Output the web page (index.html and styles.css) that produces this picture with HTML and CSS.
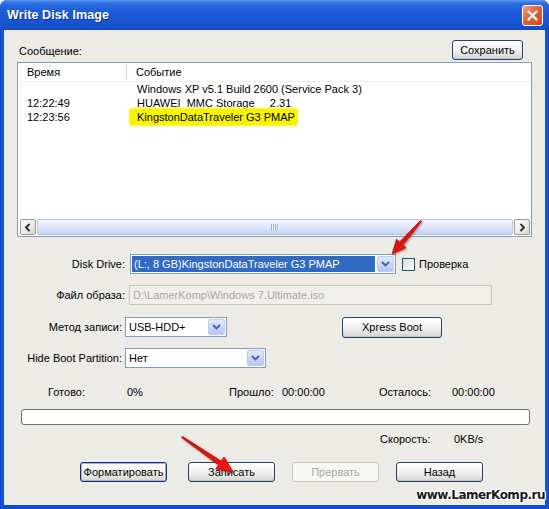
FILE: index.html
```html
<!DOCTYPE html>
<html>
<head>
<meta charset="utf-8">
<link rel="stylesheet" href="styles.css">
</head>
<body>
<div class="window">
  <div class="titlebar">
    <span class="title">Write Disk Image</span>
    <span class="close"><svg width="11" height="11" viewBox="0 0 11 11"><path d="M1.5 1.5l8 8M9.5 1.5l-8 8" stroke="#fff" stroke-width="2.2" stroke-linecap="round"/></svg></span>
  </div>
  <div class="body">
    <div class="msg-head">
      <span class="msg-label">Сообщение:</span>
      <button class="btn save">Сохранить</button>
    </div>
    <div class="list">
      <div class="lhead"><div class="c1">Время</div><div class="c2">Событие</div></div>
      <div class="lrows">
        <div class="lrow"><div class="c1"></div><div class="c2">Windows XP v5.1 Build 2600 (Service Pack 3)</div></div>
        <div class="lrow"><div class="c1">12:22:49</div><div class="c2">HUAWEI&nbsp; MMC Storage &nbsp;&nbsp;&nbsp; 2.31</div></div>
        <div class="lrow"><div class="c1">12:23:56</div><div class="c2"><span class="hl">KingstonDataTraveler G3 PMAP</span></div></div>
      </div>
      <div class="hscroll">
        <div class="sbtn"><svg width="8" height="9" viewBox="0 0 8 9"><path d="M5.5 1L2 4.5 5.5 8" stroke="#2b2b2b" stroke-width="1.8" fill="none"/></svg></div>
        <div class="thumb"><span class="grip"></span></div>
        <div class="sbtn"><svg width="8" height="9" viewBox="0 0 8 9"><path d="M2.5 1L6 4.5 2.5 8" stroke="#2b2b2b" stroke-width="1.8" fill="none"/></svg></div>
      </div>
    </div>

    <div class="row r-disk">
      <span class="lbl">Disk Drive:</span>
      <div class="combo sel w-disk"><span class="val">(L:, 8 GB)KingstonDataTraveler G3 PMAP</span><span class="dd"><svg width="9" height="6" viewBox="0 0 9 6"><path d="M1 1l3.5 3.5L8 1" stroke="#4d6185" stroke-width="1.8" fill="none"/></svg></span></div>
      <span class="chk"></span><span class="chk-lbl">Проверка</span>
    </div>
    <div class="row r-file">
      <span class="lbl">Файл образа:</span>
      <div class="field">D:\LamerKomp\Windows 7.Ultimate.iso</div>
    </div>
    <div class="row r-method">
      <span class="lbl">Метод записи:</span>
      <div class="combo w-method"><span class="val">USB-HDD+</span><span class="dd"><svg width="9" height="6" viewBox="0 0 9 6"><path d="M1 1l3.5 3.5L8 1" stroke="#4d6185" stroke-width="1.8" fill="none"/></svg></span></div>
      <button class="btn xpress">Xpress Boot</button>
    </div>
    <div class="row r-hide">
      <span class="lbl">Hide Boot Partition:</span>
      <div class="combo w-hide"><span class="val">Нет</span><span class="dd"><svg width="9" height="6" viewBox="0 0 9 6"><path d="M1 1l3.5 3.5L8 1" stroke="#4d6185" stroke-width="1.8" fill="none"/></svg></span></div>
    </div>

    <div class="stats">
      <span>Готово:</span><span>0%</span><span>Прошло:</span><span>00:00:00</span><span>Осталось:</span><span>00:00:00</span>
    </div>
    <div class="progress"></div>
    <div class="speed"><span>Скорость:</span><span>0KB/s</span></div>

    <div class="buttons">
      <button class="btn b87 focus gap-a">Форматировать</button>
      <button class="btn b87">Записать</button>
      <button class="btn b87 disabled">Прервать</button>
      <button class="btn b87">Назад</button>
    </div>
  </div>

  <div class="watermark">www.LamerKomp.ru</div>

  <svg class="arrows" width="549" height="509" viewBox="0 0 549 509">
    <defs>
      <linearGradient id="ar" x1="0" y1="0" x2="1" y2="1">
        <stop offset="0" stop-color="#c80d0d"/>
        <stop offset="1" stop-color="#f01c14"/>
      </linearGradient>
    </defs>
    <polygon points="421.6,221.3 402.9,245 405.9,247.7 392,254 396.5,239.3 399.5,242 420.4,220.5" fill="url(#ar)" stroke="#a00" stroke-width="0.6"/>
    <polygon points="181.6,437.6 218.5,465 215.6,469 233,472 224,457 221.1,461 182.4,436.4" fill="url(#ar)" stroke="#a00" stroke-width="0.6"/>
  </svg>
</div>
</body>
</html>
```

FILE: styles.css
```css
* { box-sizing: border-box; }
html, body { margin: 0; padding: 0; background: #fff; }
body {
  font-family: "Liberation Sans", Arial, sans-serif;
  font-size: 11px;
  color: #000;
}
.window {
  position: relative;
  width: 549px;
  height: 509px;
  background: linear-gradient(90deg, #0840c4, #1c5ad8 2px, #0d4cd0 4px, #0d4cd0 545px, #1c5ad8 547px, #0840c4);
  border-radius: 7px 7px 0 0;
  overflow: hidden;
  display: flex;
  flex-direction: column;
}
.titlebar {
  height: 30px;
  flex: none;
  display: flex;
  align-items: center;
  justify-content: space-between;
  padding: 0 6px 0 7px;
  background: linear-gradient(#5c9af2 0, #3a7ce8 2px, #2566de 5px, #1e5cd8 12px, #1a56d3 20px, #1650cb 27px, #1448c0 30px);
}
.title {
  color: #fff;
  font-weight: bold;
  font-size: 12.5px;
  text-shadow: 1px 1px 0 #0b2f8c;
  letter-spacing: 0.1px;
}
.close {
  width: 21px;
  height: 21px;
  border: 1px solid #fff;
  border-radius: 3px;
  background: linear-gradient(135deg, #f4a283, #e0643e 45%, #c9461f);
  display: flex;
  align-items: center;
  justify-content: center;
  margin-top: 1px;
}
.body {
  flex: 1;
  margin: 0 4px 4px;
  background: #ecebe6;
  padding: 0 13px;
  display: flex;
  flex-direction: column;
}
.msg-head {
  display: flex;
  justify-content: space-between;
  align-items: center;
  margin-top: 10px;
  height: 20px;
  padding-left: 2px;
}
.msg-label { padding-top: 2px; }
.btn {
  font: inherit;
  color: #000;
  height: 20px;
  padding: 0;
  border: 1px solid #233f78;
  border-radius: 3px;
  background: linear-gradient(#ffffff, #f6f6f4 35%, #e8e8e4 70%, #d4d3cc);
  box-shadow: inset 0 -1px 0 #c6c3b8;
}
.save { width: 71px; margin-right: 9px; }
.list {
  margin-top: 2px;
  height: 175px;
  border: 1px solid #7f9db9;
  background: #fff;
  display: flex;
  flex-direction: column;
  padding: 0 1px 1px 2px;
}
.lhead {
  height: 19px;
  flex: none;
  display: flex;
  align-items: center;
  border-bottom: 1px solid #efeee9;
}
.lhead .c1 {
  width: 107px;
  padding-left: 7px;
  border-right: 1px solid #d8d6cf;
  line-height: 14px;
}
.lhead .c2 { padding-left: 9px; }
.lrows { flex: 1; }
.lrow { display: flex; height: 14px; line-height: 14px; }
.lrow .c1 { width: 108px; padding-left: 7px; }
.lrow .c2 { padding-left: 9px; white-space: pre; }
.hl {
  background: #f8f400;
  padding: 2px 2px 2px 7px;
  margin-left: -7px;
  border-radius: 2px;
  box-shadow: 0 0 2px 1px #f3ef30;
}
.hscroll {
  height: 16px;
  flex: none;
  display: flex;
}
.sbtn {
  width: 16px;
  height: 16px;
  border: 1px solid #9c9a94;
  border-radius: 2px;
  background: linear-gradient(135deg, #ffffff, #e9e8e2 60%, #d6d4cc);
  display: flex;
  align-items: center;
  justify-content: center;
}
.thumb {
  flex: 1;
  margin: 0 1px;
  border: 1px solid #b4c6ec;
  border-radius: 2px;
  background: linear-gradient(#f4f7fe, #dfe8fb 50%, #c5d5f6);
  display: flex;
  align-items: center;
  justify-content: center;
}
.grip {
  width: 8px;
  height: 7px;
  background: repeating-linear-gradient(90deg, #9fb3dc 0 1px, #eef3fd 1px 2px);
}
.row { display: flex; align-items: center; height: 20px; flex: none; }
.lbl { flex: none; text-align: right; white-space: nowrap; }
.r-disk { margin-top: 17px; }
.r-disk .lbl { width: 108px; margin-right: 5px; }
.r-file { margin-top: 11px; }
.r-file .lbl { width: 108px; margin-right: 4px; }
.r-method { margin-top: 12px; }
.r-hide { margin-top: 11px; }
.r-method .lbl, .r-hide .lbl { width: 105px; margin-right: 3px; }
.combo {
  height: 20px;
  border: 1px solid #7f9db9;
  background: #fff;
  display: flex;
  padding: 1px;
  flex: none;
}
.combo .val {
  flex: 1;
  padding-left: 2px;
  line-height: 16px;
  white-space: nowrap;
  overflow: hidden;
}
.sel .val {
  background: #316ac5;
  color: #fff;
  margin-right: 2px;
}
.combo .dd {
  width: 17px;
  flex: none;
  border: 1px solid #bccbef;
  border-radius: 2px;
  background: linear-gradient(#e0e9fd, #c3d4f8 60%, #b3c7f5);
  display: flex;
  align-items: center;
  justify-content: center;
}
.w-disk { width: 266px; }
.w-method { width: 102px; }
.w-hide { width: 141px; }
.chk {
  width: 13px;
  height: 13px;
  margin-left: 6px;
  border: 1px solid #1c5180;
  background: linear-gradient(135deg, #dcdbd5, #ffffff);
  flex: none;
}
.chk-lbl { margin-left: 4px; }
.field {
  width: 363px;
  height: 20px;
  border: 1px solid #c9c7ba;
  background: #f0efea;
  color: #aca899;
  line-height: 18px;
  padding-left: 3px;
}
.xpress { width: 100px; height: 21px; margin-left: 115px; }
.stats {
  margin-top: 17px;
  height: 14px;
  line-height: 14px;
  display: grid;
  grid-template-columns: 79px 102px 53px 97px 73px auto;
  padding-left: 31px;
}
.progress {
  margin: 10px 2px 0 4px;
  height: 16px;
  border: 1px solid #6f6f6f;
  border-radius: 3px;
  background: #fff;
  flex: none;
}
.speed {
  margin-top: 7px;
  height: 14px;
  line-height: 14px;
  display: grid;
  grid-template-columns: 74px auto;
  padding-left: 363px;
}
.buttons {
  margin-top: 16px;
  display: flex;
  gap: 17px;
  padding-left: 63px;
}
.b87 { width: 87px; height: 20px; }
.gap-a { margin-right: 4px; }
.focus { border-color: #1a2f60; box-shadow: inset 0 0 0 1px #98b4e8; white-space: nowrap; overflow: visible; }
.disabled {
  border-color: #c9c7ba;
  background: #f7f7f4;
  color: #aca899;
  box-shadow: none;
}
.watermark {
  position: absolute;
  right: 4px;
  top: 488px;
  font-family: "DejaVu Sans", sans-serif;
  font-weight: bold;
  font-size: 12px;
  color: #1a1a1a;
  letter-spacing: -0.5px;
  white-space: nowrap;
  text-shadow: 1px 0 0 #fff, -1px 0 0 #fff, 0 1px 0 #fff, 0 -1px 0 #fff, 1px 1px 0 #fff, -1px -1px 0 #fff, 1px -1px 0 #fff, -1px 1px 0 #fff;
}
.arrows {
  position: absolute;
  left: 0;
  top: 0;
  pointer-events: none;
  filter: drop-shadow(1px 1px 1px rgba(120, 0, 0, 0.5));
}
```
